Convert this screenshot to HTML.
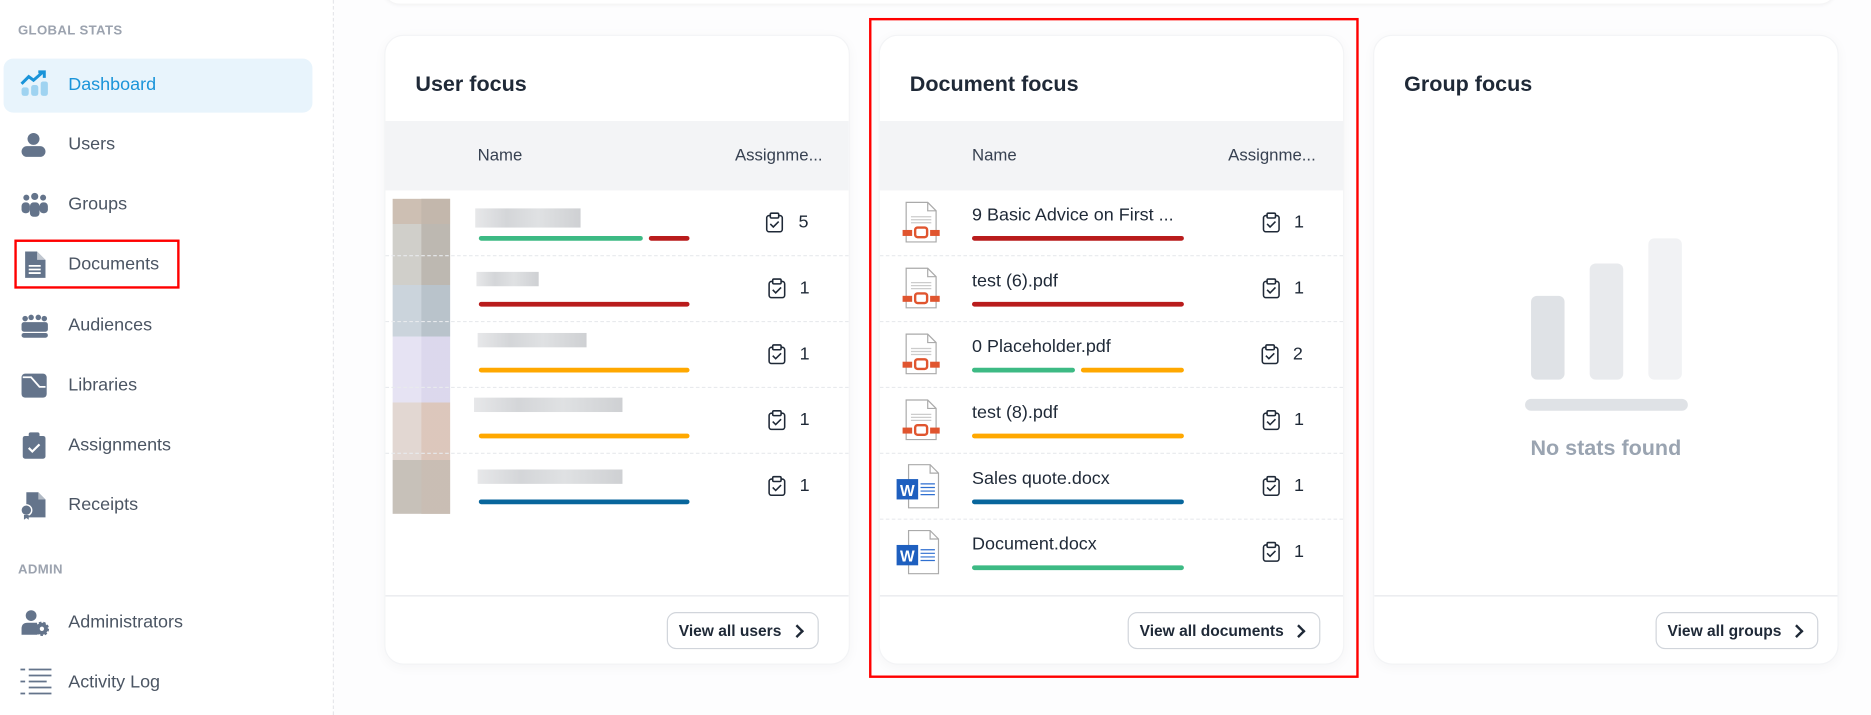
<!DOCTYPE html>
<html><head><meta charset="utf-8"><style>
*{margin:0;padding:0;box-sizing:border-box}
html,body{width:1871px;height:715px;overflow:hidden;background:#fff;font-family:"Liberation Sans",sans-serif}
#w{position:absolute;left:0;top:0;width:1563px;height:597px;transform:scale(1.19706,1.1977);transform-origin:0 0;background:#fdfdfe}
.a{position:absolute}
#side{position:absolute;left:0;top:0;width:279px;height:597px;background:#fff;border-right:1px dashed #e5e7eb}
.sec{position:absolute;left:15px;font-size:11px;font-weight:bold;color:#9ca3af;letter-spacing:.3px}
.nav{position:absolute;left:57px;font-size:15px;color:#4b5563;line-height:20px}
.ic{position:absolute;left:17px;width:24px;height:24px}
.card{position:absolute;top:29px;width:389px;height:526px;background:#fff;border-radius:16px;box-shadow:0 2px 10px rgba(0,0,0,.035);border:1px solid #f3f4f6;overflow:hidden}
.ttl{position:absolute;left:25px;top:30px;font-size:18px;font-weight:bold;color:#1f2937}
.hdr{position:absolute;left:0;top:71px;width:100%;height:58px;background:#f3f4f6;font-size:14px;color:#374151}
.hdr span{position:absolute;top:20px}
.row{position:absolute;left:0;width:100%;height:55px;border-bottom:1px dashed #e8eaed}
.bar{position:absolute;height:4px;border-radius:2px;top:38px}
.num{position:absolute;font-size:15px;color:#1f2937;top:18px}
.cb{position:absolute;top:18px;width:16px;height:18px}
.foot{position:absolute;left:0;top:467px;width:100%;border-top:1px solid #e5e7eb}
.btn{position:absolute;top:481px;height:31px;border:1px solid #d1d5db;border-radius:8px;font-size:13px;font-weight:bold;color:#1f2937;padding:0 30px 0 9px;line-height:29px;background:#fff}
.btn:after{content:"";position:absolute;right:13px;top:11px;width:6px;height:6px;border-right:2px solid #1f2937;border-top:2px solid #1f2937;transform:rotate(45deg)}
.nm{position:absolute;left:77px;top:12px;font-size:15px;color:#1f2937}
.blur{position:absolute;height:16px;background:linear-gradient(90deg,#e4e5e7,#cfd1d4 30%,#dcdee0 60%,#c9cbce);opacity:.9}
</style></head><body><div id="w">
<div class="a" style="left:320px;top:-20px;width:1214px;height:23px;background:#fff;border-radius:0 0 14px 14px;box-shadow:0 1px 4px rgba(0,0,0,.06)"></div>

<div id="side">
<div class="sec" style="top:20px">GLOBAL STATS</div>
<div class="a" style="left:3px;top:49px;width:258px;height:45px;background:#e8f4fc;border-radius:8px"></div>
<svg class="ic" style="top:58px" viewBox="0 0 24 24"><rect x="1" y="15" width="6" height="7" rx="2" fill="#9fd3f1"/><rect x="9" y="13" width="6" height="9" rx="2" fill="#9fd3f1"/><rect x="17" y="10" width="6" height="12" rx="2" fill="#9fd3f1"/><path d="M1 12 L7 6 L11 9 L19 2" stroke="#1a94d9" stroke-width="2.5" fill="none"/><path d="M15 2 H20 V7" stroke="#1a94d9" stroke-width="2.5" fill="none"/></svg>
<div class="nav" style="top:61px;color:#1a94d9;font-weight:500">Dashboard</div>
<svg class="ic" style="top:109px" viewBox="0 0 24 24" fill="#64748b"><circle cx="11" cy="7" r="5"/><rect x="1" y="13" width="20" height="9" rx="4.5"/></svg>
<div class="nav" style="top:111px">Users</div>
<svg class="ic" style="top:159px" viewBox="0 0 24 24" fill="#64748b"><circle cx="5" cy="6" r="2.5"/><circle cx="12" cy="5" r="3"/><circle cx="19" cy="6" r="2.5"/><rect x="1" y="10" width="7" height="9" rx="3"/><rect x="8" y="10" width="8" height="12" rx="3"/><rect x="16" y="10" width="7" height="9" rx="3"/></svg>
<div class="nav" style="top:161px">Groups</div>
<svg class="ic" style="top:209px" viewBox="0 0 24 24"><path d="M4 1 H14 L21 8 V23 H4 Z" fill="#64748b"/><path d="M14 1 V8 H21" fill="#fff" opacity=".6"/><path d="M7 13 H17 M7 16 H17 M7 19 H17" stroke="#fff" stroke-width="1.5"/></svg>
<div class="nav" style="top:211px">Documents</div>
<div class="a" style="left:12px;top:200px;width:138px;height:41px;border:2px solid #ff0000"></div>
<svg class="ic" style="top:260px" viewBox="0 0 24 24" fill="#64748b"><circle cx="4" cy="6" r="2.3"/><circle cx="9" cy="5" r="2.3"/><circle cx="15" cy="5" r="2.3"/><circle cx="20" cy="6" r="2.3"/><rect x="1" y="9" width="22" height="8" rx="2"/><rect x="1" y="18" width="22" height="4" rx="2"/></svg>
<div class="nav" style="top:262px">Audiences</div>
<svg class="ic" style="top:310px" viewBox="0 0 24 24"><rect x="1" y="2" width="21" height="20" rx="3" fill="#64748b"/><path d="M2 5 H9 L16 13 H21" stroke="#fff" stroke-width="1.5" fill="none"/></svg>
<div class="nav" style="top:312px">Libraries</div>
<svg class="ic" style="top:360px" viewBox="0 0 24 24"><rect x="2" y="4" width="19" height="19" rx="2" fill="#64748b"/><rect x="7" y="1" width="9" height="5" rx="1.5" fill="#64748b"/><path d="M7 14 L10 17 L16 11" stroke="#fff" stroke-width="1.8" fill="none"/></svg>
<div class="nav" style="top:362px">Assignments</div>
<svg class="ic" style="top:410px" viewBox="0 0 24 24"><path d="M5 1 H15 L21 7 V22 H5 Z" fill="#64748b"/><path d="M15 1 V7 H21" fill="#fff" opacity=".5"/><circle cx="5" cy="16" r="4.5" fill="#64748b" stroke="#fff" stroke-width="1.2"/><path d="M3 20 V24 L5 22.5 L7 24 V20" fill="#64748b"/></svg>
<div class="nav" style="top:412px">Receipts</div>
<div class="sec" style="top:470px">ADMIN</div>
<svg class="ic" style="top:508px" viewBox="0 0 24 24" fill="#64748b"><circle cx="9" cy="6" r="4.5"/><path d="M1 22 V17 Q1 12 6 12 H14 V22 Z"/><circle cx="18" cy="17" r="5" fill="#64748b" stroke="#64748b" stroke-width="2" stroke-dasharray="2 1.5"/><circle cx="18" cy="17" r="1.8" fill="#fff"/></svg>
<div class="nav" style="top:510px">Administrators</div>
<svg class="ic" style="top:558px;width:26px" viewBox="0 0 26 24" stroke="#64748b" stroke-width="1.5"><path d="M0 1 H4 M7 1 H26 M7 6 H26 M0 11 H4 M7 11 H22 M7 16 H26 M0 21 H4 M7 21 H26"/></svg>
<div class="nav" style="top:560px">Activity Log</div>
</div>

<!-- User focus -->
<div class="card" style="left:321px">
<div class="ttl">User focus</div>
<div class="hdr"><span style="left:77px">Name</span><span style="left:292px">Assignme...</span></div>
<div class="a" style="left:6px;top:136px;width:48px;height:263px;background:linear-gradient(#cdbfb3 0 21px,#d0cfca 21px 72px,#cbd4dc 72px 115px,#e6e3f3 115px 170px,#e2d7d2 170px 218px,#c7c1b9 218px)"></div>
<div class="a" style="left:30px;top:136px;width:24px;height:263px;background:linear-gradient(#c2b6ab 0 21px,#bbb5ae 21px 72px,#b7c1c9 72px 115px,#dbd7ec 115px 170px,#dcc5b9 170px 218px,#c9bdb3 218px);opacity:.9"></div>
<div class="row" style="top:129px"><div class="blur" style="left:75px;top:15px;width:88px"></div><div class="bar" style="left:78px;width:137px;background:#3dba84"></div><div class="bar" style="left:220px;width:34px;background:#b91c1c"></div>
<svg class="cb" style="left:317px" viewBox="0 0 16 18"><rect x="1.5" y="3" width="13" height="13.5" rx="2" fill="none" stroke="#1f2937" stroke-width="1.3"/><rect x="4.5" y="1" width="7" height="4" rx="1" fill="#fff" stroke="#1f2937" stroke-width="1.3"/><path d="M4.5 10 L7 12.5 L11.5 8" fill="none" stroke="#1f2937" stroke-width="1.3"/></svg><div class="num" style="left:345px">5</div></div>
<div class="row" style="top:184px"><div class="blur" style="left:76px;top:13px;width:52px;height:12px"></div><div class="bar" style="left:78px;width:176px;background:#b91c1c"></div>
<svg class="cb" style="left:319px" viewBox="0 0 16 18"><rect x="1.5" y="3" width="13" height="13.5" rx="2" fill="none" stroke="#1f2937" stroke-width="1.3"/><rect x="4.5" y="1" width="7" height="4" rx="1" fill="#fff" stroke="#1f2937" stroke-width="1.3"/><path d="M4.5 10 L7 12.5 L11.5 8" fill="none" stroke="#1f2937" stroke-width="1.3"/></svg><div class="num" style="left:346px">1</div></div>
<div class="row" style="top:239px"><div class="blur" style="left:77px;top:9px;width:91px;height:12px"></div><div class="bar" style="left:78px;width:176px;background:#ffa800"></div>
<svg class="cb" style="left:319px" viewBox="0 0 16 18"><rect x="1.5" y="3" width="13" height="13.5" rx="2" fill="none" stroke="#1f2937" stroke-width="1.3"/><rect x="4.5" y="1" width="7" height="4" rx="1" fill="#fff" stroke="#1f2937" stroke-width="1.3"/><path d="M4.5 10 L7 12.5 L11.5 8" fill="none" stroke="#1f2937" stroke-width="1.3"/></svg><div class="num" style="left:346px">1</div></div>
<div class="row" style="top:294px"><div class="blur" style="left:74px;top:8px;width:124px;height:12px"></div><div class="bar" style="left:78px;width:176px;background:#ffa800"></div>
<svg class="cb" style="left:319px" viewBox="0 0 16 18"><rect x="1.5" y="3" width="13" height="13.5" rx="2" fill="none" stroke="#1f2937" stroke-width="1.3"/><rect x="4.5" y="1" width="7" height="4" rx="1" fill="#fff" stroke="#1f2937" stroke-width="1.3"/><path d="M4.5 10 L7 12.5 L11.5 8" fill="none" stroke="#1f2937" stroke-width="1.3"/></svg><div class="num" style="left:346px">1</div></div>
<div class="row" style="top:349px;border-bottom:none"><div class="blur" style="left:77px;top:13px;width:121px;height:12px"></div><div class="bar" style="left:78px;width:176px;background:#08669c"></div>
<svg class="cb" style="left:319px" viewBox="0 0 16 18"><rect x="1.5" y="3" width="13" height="13.5" rx="2" fill="none" stroke="#1f2937" stroke-width="1.3"/><rect x="4.5" y="1" width="7" height="4" rx="1" fill="#fff" stroke="#1f2937" stroke-width="1.3"/><path d="M4.5 10 L7 12.5 L11.5 8" fill="none" stroke="#1f2937" stroke-width="1.3"/></svg><div class="num" style="left:346px">1</div></div>
<div class="foot"></div>
<div class="btn" style="left:235px">View all users</div>
</div>

<!-- Document focus -->
<div class="card" style="left:734px">
<div class="ttl">Document focus</div>
<div class="hdr"><span style="left:77px">Name</span><span style="left:291px">Assignme...</span></div>
<div class="row" style="top:129px">
<svg class="a" style="left:16px;top:9px;width:38px;height:36px" viewBox="0 0 38 36"><path d="M6 1 H24 L31 8 V34 H6 Z" fill="#fff" stroke="#aaa"/><path d="M24 1 V8 H31" fill="none" stroke="#aaa"/><path d="M10 13 H27 M10 15.5 H27 M10 18 H27" stroke="#ccc"/><rect x="3" y="24" width="8" height="5" fill="#e0552f"/><rect x="26" y="24" width="8" height="5" fill="#e0552f"/><rect x="13.5" y="22" width="10" height="8" rx="2" fill="#fff" stroke="#e0552f" stroke-width="2"/></svg>
<div class="nm">9 Basic Advice on First ...</div><div class="bar" style="left:77px;width:177px;background:#b91c1c"></div>
<svg class="cb" style="left:319px" viewBox="0 0 16 18"><rect x="1.5" y="3" width="13" height="13.5" rx="2" fill="none" stroke="#1f2937" stroke-width="1.3"/><rect x="4.5" y="1" width="7" height="4" rx="1" fill="#fff" stroke="#1f2937" stroke-width="1.3"/><path d="M4.5 10 L7 12.5 L11.5 8" fill="none" stroke="#1f2937" stroke-width="1.3"/></svg><div class="num" style="left:346px">1</div></div>
<div class="row" style="top:184px">
<svg class="a" style="left:16px;top:9px;width:38px;height:36px" viewBox="0 0 38 36"><path d="M6 1 H24 L31 8 V34 H6 Z" fill="#fff" stroke="#aaa"/><path d="M24 1 V8 H31" fill="none" stroke="#aaa"/><path d="M10 13 H27 M10 15.5 H27 M10 18 H27" stroke="#ccc"/><rect x="3" y="24" width="8" height="5" fill="#e0552f"/><rect x="26" y="24" width="8" height="5" fill="#e0552f"/><rect x="13.5" y="22" width="10" height="8" rx="2" fill="#fff" stroke="#e0552f" stroke-width="2"/></svg>
<div class="nm">test (6).pdf</div><div class="bar" style="left:77px;width:177px;background:#b91c1c"></div>
<svg class="cb" style="left:319px" viewBox="0 0 16 18"><rect x="1.5" y="3" width="13" height="13.5" rx="2" fill="none" stroke="#1f2937" stroke-width="1.3"/><rect x="4.5" y="1" width="7" height="4" rx="1" fill="#fff" stroke="#1f2937" stroke-width="1.3"/><path d="M4.5 10 L7 12.5 L11.5 8" fill="none" stroke="#1f2937" stroke-width="1.3"/></svg><div class="num" style="left:346px">1</div></div>
<div class="row" style="top:239px">
<svg class="a" style="left:16px;top:9px;width:38px;height:36px" viewBox="0 0 38 36"><path d="M6 1 H24 L31 8 V34 H6 Z" fill="#fff" stroke="#aaa"/><path d="M24 1 V8 H31" fill="none" stroke="#aaa"/><path d="M10 13 H27 M10 15.5 H27 M10 18 H27" stroke="#ccc"/><rect x="3" y="24" width="8" height="5" fill="#e0552f"/><rect x="26" y="24" width="8" height="5" fill="#e0552f"/><rect x="13.5" y="22" width="10" height="8" rx="2" fill="#fff" stroke="#e0552f" stroke-width="2"/></svg>
<div class="nm">0 Placeholder.pdf</div><div class="bar" style="left:77px;width:86px;background:#3dba84"></div><div class="bar" style="left:168px;width:86px;background:#ffa800"></div>
<svg class="cb" style="left:318px" viewBox="0 0 16 18"><rect x="1.5" y="3" width="13" height="13.5" rx="2" fill="none" stroke="#1f2937" stroke-width="1.3"/><rect x="4.5" y="1" width="7" height="4" rx="1" fill="#fff" stroke="#1f2937" stroke-width="1.3"/><path d="M4.5 10 L7 12.5 L11.5 8" fill="none" stroke="#1f2937" stroke-width="1.3"/></svg><div class="num" style="left:345px">2</div></div>
<div class="row" style="top:294px">
<svg class="a" style="left:16px;top:9px;width:38px;height:36px" viewBox="0 0 38 36"><path d="M6 1 H24 L31 8 V34 H6 Z" fill="#fff" stroke="#aaa"/><path d="M24 1 V8 H31" fill="none" stroke="#aaa"/><path d="M10 13 H27 M10 15.5 H27 M10 18 H27" stroke="#ccc"/><rect x="3" y="24" width="8" height="5" fill="#e0552f"/><rect x="26" y="24" width="8" height="5" fill="#e0552f"/><rect x="13.5" y="22" width="10" height="8" rx="2" fill="#fff" stroke="#e0552f" stroke-width="2"/></svg>
<div class="nm">test (8).pdf</div><div class="bar" style="left:77px;width:177px;background:#ffa800"></div>
<svg class="cb" style="left:319px" viewBox="0 0 16 18"><rect x="1.5" y="3" width="13" height="13.5" rx="2" fill="none" stroke="#1f2937" stroke-width="1.3"/><rect x="4.5" y="1" width="7" height="4" rx="1" fill="#fff" stroke="#1f2937" stroke-width="1.3"/><path d="M4.5 10 L7 12.5 L11.5 8" fill="none" stroke="#1f2937" stroke-width="1.3"/></svg><div class="num" style="left:346px">1</div></div>
<div class="row" style="top:349px">
<svg class="a" style="left:13px;top:8px;width:42px;height:38px" viewBox="0 0 42 38"><path d="M11 1 H29 L36 8 V37 H11 Z" fill="#fff" stroke="#aaa"/><path d="M29 1 V8 H36" fill="none" stroke="#aaa"/><rect x="1" y="13" width="18" height="17" fill="#1e5fbf"/><text x="10" y="27" font-family="Liberation Sans" font-weight="bold" font-size="13" fill="#fff" text-anchor="middle">W</text><path d="M21 17 H33 M21 20 H33 M21 23 H33 M21 26 H33" stroke="#2f6fd0"/></svg>
<div class="nm">Sales quote.docx</div><div class="bar" style="left:77px;width:177px;background:#08669c"></div>
<svg class="cb" style="left:319px" viewBox="0 0 16 18"><rect x="1.5" y="3" width="13" height="13.5" rx="2" fill="none" stroke="#1f2937" stroke-width="1.3"/><rect x="4.5" y="1" width="7" height="4" rx="1" fill="#fff" stroke="#1f2937" stroke-width="1.3"/><path d="M4.5 10 L7 12.5 L11.5 8" fill="none" stroke="#1f2937" stroke-width="1.3"/></svg><div class="num" style="left:346px">1</div></div>
<div class="row" style="top:404px;border-bottom:none">
<svg class="a" style="left:13px;top:8px;width:42px;height:38px" viewBox="0 0 42 38"><path d="M11 1 H29 L36 8 V37 H11 Z" fill="#fff" stroke="#aaa"/><path d="M29 1 V8 H36" fill="none" stroke="#aaa"/><rect x="1" y="13" width="18" height="17" fill="#1e5fbf"/><text x="10" y="27" font-family="Liberation Sans" font-weight="bold" font-size="13" fill="#fff" text-anchor="middle">W</text><path d="M21 17 H33 M21 20 H33 M21 23 H33 M21 26 H33" stroke="#2f6fd0"/></svg>
<div class="nm">Document.docx</div><div class="bar" style="left:77px;width:177px;background:#3dba84"></div>
<svg class="cb" style="left:319px" viewBox="0 0 16 18"><rect x="1.5" y="3" width="13" height="13.5" rx="2" fill="none" stroke="#1f2937" stroke-width="1.3"/><rect x="4.5" y="1" width="7" height="4" rx="1" fill="#fff" stroke="#1f2937" stroke-width="1.3"/><path d="M4.5 10 L7 12.5 L11.5 8" fill="none" stroke="#1f2937" stroke-width="1.3"/></svg><div class="num" style="left:346px">1</div></div>
<div class="foot"></div>
<div class="btn" style="left:207px">View all documents</div>
</div>
<div class="a" style="left:726px;top:15px;width:409px;height:551px;border:2px solid #ff0000"></div>

<!-- Group focus -->
<div class="card" style="left:1147px">
<div class="ttl">Group focus</div>
<div class="a" style="left:131px;top:217px;width:28px;height:70px;border-radius:5px;background:#dfe2e6"></div>
<div class="a" style="left:180px;top:190px;width:28px;height:97px;border-radius:5px;background:#e8eaed"></div>
<div class="a" style="left:229px;top:169px;width:28px;height:118px;border-radius:5px;background:#f1f2f4"></div>
<div class="a" style="left:126px;top:303px;width:136px;height:10px;border-radius:5px;background:#dfe2e6"></div>
<div class="a" style="left:0;top:334px;width:100%;text-align:center;font-size:18px;font-weight:bold;color:#9aa4b1">No stats found</div>
<div class="foot"></div>
<div class="btn" style="left:235px">View all groups</div>
</div>
</div></body></html>
